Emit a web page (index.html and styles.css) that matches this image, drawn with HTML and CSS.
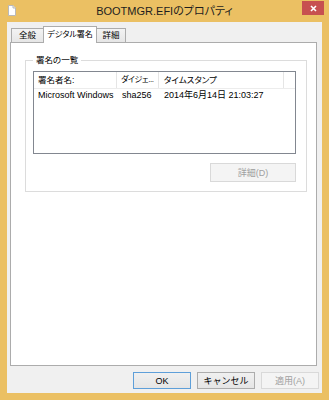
FILE: index.html
```html
<!DOCTYPE html>
<html lang="ja">
<head>
    <meta charset="UTF-8">
    <meta name="viewport" content="width=device-width, initial-scale=1.0">
    <title>BOOTMGR.EFIのプロパティ</title>
    <link rel="stylesheet" href="styles.css">
</head>
<body>
    <div class="window">
        <div class="titlebar">
            <div class="title-icon">
                <svg width="8" height="11" viewBox="0 0 8 11">
                    <path d="M0.5 0.5 H5 L7.5 3 V10.5 H0.5 Z" fill="#fff" stroke="#b9b9b9"/>
                    <path d="M5 0.5 V3 H7.5" fill="#e8e8e8" stroke="#b9b9b9"/>
                </svg>
            </div>
            <div class="title">BOOTMGR.EFIのプロパティ</div>
            <div class="title-right">
                <button class="close">
                    <svg width="7" height="7" viewBox="0 0 7 7">
                        <path d="M1 1 L6 6 M6 1 L1 6" stroke="#fff" stroke-width="1.6"/>
                    </svg>
                </button>
            </div>
        </div>
        <div class="client">
            <div class="tabs">
                <div class="tab tab-general">全般</div>
                <div class="tab tab-sign active">デジタル署名</div>
                <div class="tab tab-detail">詳細</div>
            </div>
            <div class="panel">
                <fieldset class="group">
                    <legend>署名の一覧</legend>
                    <div class="list">
                        <div class="list-header">
                            <div class="col c1">署名者名:</div>
                            <div class="col c2">ダイジェ...</div>
                            <div class="col c3">タイムスタンプ</div>
                            <div class="col c4"></div>
                        </div>
                        <div class="list-row">
                            <div class="col c1">Microsoft Windows</div>
                            <div class="col c2">sha256</div>
                            <div class="col c3">2014年6月14日 21:03:27</div>
                        </div>
                    </div>
                    <div class="group-actions">
                        <button class="btn btn-detail" disabled>詳細(D)</button>
                    </div>
                </fieldset>
            </div>
            <div class="dialog-buttons">
                <button class="btn default">OK</button>
                <button class="btn">キャンセル</button>
                <button class="btn" disabled>適用(A)</button>
            </div>
        </div>
    </div>
</body>
</html>
```

FILE: styles.css
```css
* {
    box-sizing: border-box;
}
body {
    margin: 0;
    font-family: "Liberation Sans", "Noto Sans CJK JP", sans-serif;
    font-size: 9px;
    color: #000;
    font-feature-settings: "palt";
}
.window {
    width: 329px;
    height: 400px;
    background-color: #ebc063;
    display: flex;
    flex-direction: column;
    padding-bottom: 7px;
}
.titlebar {
    height: 22px;
    display: grid;
    grid-template-columns: 1fr auto 1fr;
    align-items: start;
}
.title-icon {
    padding: 5px 0 0 8px;
    line-height: 0;
}
.title {
    font-size: 11px;
    line-height: 22px;
    color: #1e1e1e;
    white-space: nowrap;
}
.title-right {
    display: flex;
    justify-content: flex-end;
}
.close {
    margin: 1px 5px 0 0;
    width: 22px;
    height: 14px;
    padding: 0;
    border: none;
    background-color: #c75050;
    display: flex;
    align-items: center;
    justify-content: center;
}
.client {
    flex: 1;
    margin: 0 7px;
    background-color: #f0f0f0;
    padding: 4px 3px 4px 3px;
    display: flex;
    flex-direction: column;
}
.tabs {
    height: 16px;
    display: flex;
    align-items: flex-end;
    padding-left: 1px;
    position: relative;
    z-index: 1;
}
.tab {
    height: 14px;
    line-height: 13px;
    font-size: 8.5px;
    text-align: center;
    border: 1px solid #acacac;
    border-bottom: none;
    background: linear-gradient(#f3f3f3, #e6e6e6);
    margin-right: -1px;
    white-space: nowrap;
}
.tab-general {
    width: 33px;
}
.tab-sign {
    width: 54px;
    font-size: 8px;
}
.tab-detail {
    width: 30px;
}
.tab.active {
    height: 17px;
    line-height: 15px;
    margin-bottom: -1px;
    background: #fff;
    position: relative;
    z-index: 2;
}
.panel {
    flex: 1;
    margin-right: 2px;
    background-color: #fff;
    border: 1px solid #acacac;
    padding: 12px 9px 0 14px;
}
.group {
    margin: 0;
    border: 1px solid #dcdcdc;
    padding: 5px 10px 9px 7px;
}
.group legend {
    padding: 0 3px;
    line-height: 11px;
    font-size: 8.5px;
}
.list {
    height: 83px;
    border: 1px solid #828790;
    background-color: #fff;
}
.list-header,
.list-row {
    display: flex;
}
.list-header {
    height: 17px;
    line-height: 16px;
    font-size: 8.5px;
    border-bottom: 1px solid #ececec;
}
.list-row {
    line-height: 11px;
    padding-top: 1px;
}
.col {
    white-space: nowrap;
    overflow: hidden;
    padding-left: 5px;
}
.c1 {
    width: 83px;
    padding-left: 4px;
}
.c2 {
    width: 42px;
}
.list-header .c2 {
    font-size: 8px;
    letter-spacing: -0.4px;
    padding-left: 4px;
}
.c3 {
    width: 125px;
}
.c4 {
    flex: 1;
}
.list-header .c1,
.list-header .c2,
.list-header .c3 {
    border-right: 1px solid #e5e5e5;
}
.group-actions {
    display: flex;
    justify-content: flex-end;
    margin-top: 9px;
}
.btn {
    font-family: inherit;
    font-size: 9px;
    color: #000;
    width: 58px;
    height: 17px;
    padding: 0;
    border: 1px solid #acacac;
    background: linear-gradient(#f0f0f0, #e5e5e5);
}
.btn.default {
    border-color: #5e9fd9;
}
.btn:disabled {
    color: #a0a0a0;
    border-color: #d9d9d9;
    background: #f4f4f4;
}
.btn-detail {
    width: 86px;
    height: 19px;
}
.dialog-buttons {
    display: flex;
    justify-content: flex-end;
    gap: 6px;
    margin-top: 6px;
}
```
